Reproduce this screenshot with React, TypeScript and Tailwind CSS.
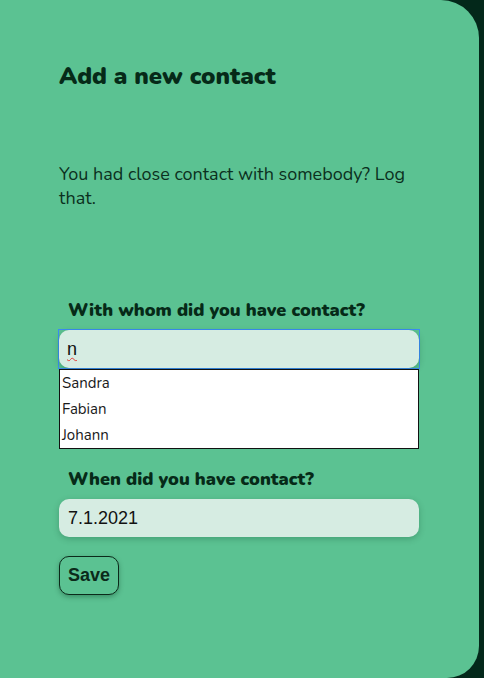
import React from 'react';

const names = ['Sandra', 'Fabian', 'Johann'];

export default function App() {
  return (
    <div className="w-[484px] h-[678px] bg-[#03281a] overflow-hidden">
      <div
        className="w-[479px] h-full bg-[#5bc292] rounded-tr-[38px] rounded-br-[32px] pt-[60px] pl-[59px] text-[#062a18]"
        style={{ fontFamily: 'Nunito, Lato, "Noto Sans", sans-serif' }}
      >
        <div className="w-[360px]">
          <h1 className="text-[24px] leading-[32px] font-black">Add a new contact</h1>
          <p className="mt-[70px] text-[18px] leading-[24px] text-[#0b3020]">
            You had close contact with somebody? Log that.
          </p>

          <label className="block mt-[88px] ml-[9px] text-[18px] leading-[24px] font-black">
            With whom did you have contact?
          </label>
          <div className="relative mt-[7px]">
            <div className="-mx-px border border-[#3b8cf5]">
              <div className="h-[38px] rounded-[10px] bg-[#d6ece2] shadow-[0_2px_6px_rgba(0,60,30,0.25)] flex items-center px-[8px]">
                <span
                  className="text-[18px] text-[#111] underline decoration-wavy decoration-[#e53935] decoration-1 underline-offset-[2px]"
                  style={{ fontFamily: '"Liberation Sans", Arial, sans-serif' }}
                >
                  n
                </span>
              </div>
            </div>
            <ul className="absolute left-0 top-[40px] w-[360px] bg-white border border-[#111] z-10">
              {names.map((n) => (
                <li key={n} className="h-[26px] leading-[26px] px-[2px] text-[15px] text-[#1a1a1a]">
                  {n}
                </li>
              ))}
            </ul>
          </div>

          <label className="block mt-[98px] ml-[9px] text-[18px] leading-[24px] font-black">
            When did you have contact?
          </label>
          <div
            className="mt-[8px] h-[38px] rounded-[10px] bg-[#d6ece2] shadow-[0_2px_6px_rgba(0,60,30,0.25)] flex items-center px-[9px] text-[18px] text-[#111]"
            style={{ fontFamily: '"Liberation Sans", Arial, sans-serif' }}
          >
            7.1.2021
          </div>

          <button
            className="mt-[19px] w-[60px] h-[39px] rounded-[10px] border border-[#0b2a1a] bg-[#5bc292] shadow-[0_2px_5px_rgba(0,50,25,0.35)] text-[18px] font-bold text-[#0b2a1a]"
            style={{ fontFamily: '"Liberation Sans", Arial, sans-serif' }}
          >
            Save
          </button>
        </div>
      </div>
    </div>
  );
}
